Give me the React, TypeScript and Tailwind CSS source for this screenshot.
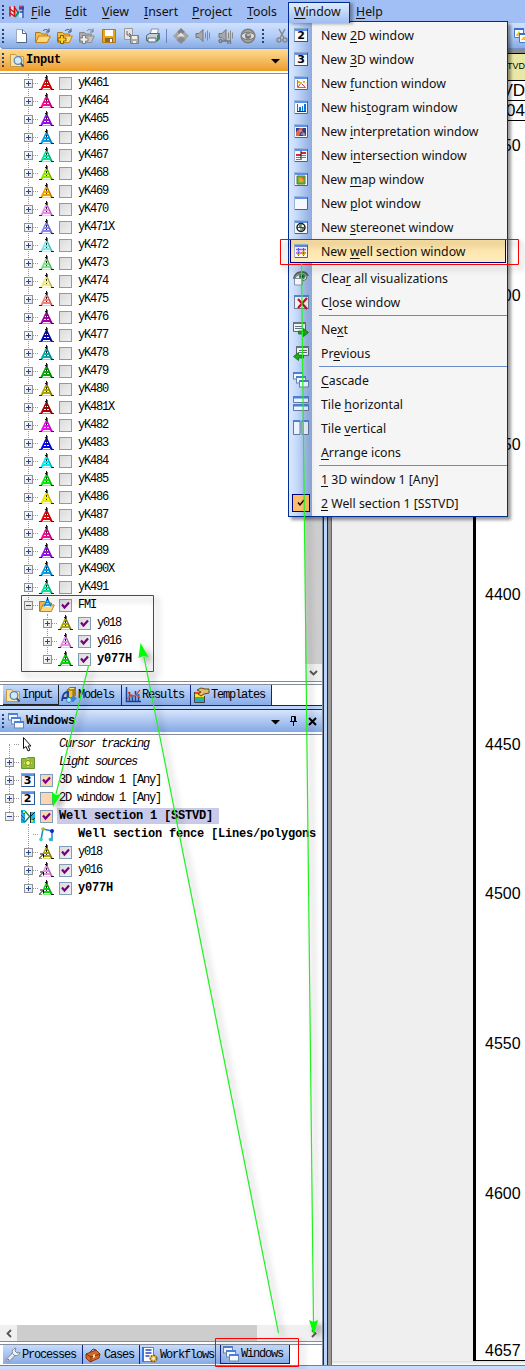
import React from "react";

const MONO = "font-['Liberation_Mono',monospace]";
const UI = "font-['Noto_Sans','Noto_Sans_CJK_SC',sans-serif]";

type IconProps = { children: React.ReactNode; w?: number; h?: number };

function Svg({ children, w = 16, h = 16 }: IconProps) {
  return (
    <svg width={w} height={h} viewBox={`0 0 ${w} ${h}`} className="block shrink-0" fill="none">
      {children}
    </svg>
  );
}

function Tower({ color, linked }: { color: string; linked?: boolean }) {
  return (
    <Svg w={15} h={16}>
      <path d="M6.800 3h1.400l5.600 11.500H1.200z" fill={color} />
      <path d="M8.200 3l5.600 11.500h-1.300L7.500 4z" fill="#000" fillOpacity=".28" />
      <g shapeRendering="crispEdges">
        <path d="M6 7h1v1H6zM8 7h1v1H8zM5 10h2v1H5zM8 10h2v1H8zM4 13h7v1H4z" fill="#fff" />
        <path d="M7 0h1v4H7zM6 2h1v1H6z" fill="#111" />
        <path d="M8 1h1v3H8z" fill="#666" />
        <path d="M7 6h1v2H7zM7 10h1v1H7zM0 14h3v1H0zM12 14h3v1h-3z" fill="#222" />
      </g>
      {linked && (
        <>
          <path d="M0 9h4.500v5.500H0z" fill="#fff" />
          <path d="M0 14.500L4 10.500M1 10h3.500v3.500" stroke="#000" />
        </>
      )}
    </Svg>
  );
}

function NumberWindow({ n }: { n: string }) {
  return (
    <span className="flex h-[14px] w-[14px] shrink-0 flex-col border border-[#8fa6c8] border-r-[#33588f] border-b-[#33588f] bg-[#f7f9fc]">
      <span className="h-[2px] bg-[#5b91ec]" />
      <span className="flex h-[10px] items-center justify-center font-['DejaVu_Sans',sans-serif] text-[11px] leading-[10px] font-bold text-black">
        {n}
      </span>
    </span>
  );
}

function MiniWindow({ children }: { children?: React.ReactNode }) {
  return (
    <Svg w={14} h={14}>
      <rect x=".5" y=".5" width="13" height="13" fill="#f5f8fd" stroke="#9db4d8" />
      <path d="M1 1h12v2H1z" fill="#5b91ec" />
      <path d="M13.500 1v12.500H1" stroke="#48648f" />
      {children}
    </Svg>
  );
}

function CascadeIcon() {
  return (
    <Svg>
      {[0, 4, 8].map((p, i) => (
        <g key={i} transform={`translate(${i * 3} ${p})`}>
          <rect x=".5" y=".5" width="9" height="6.500" fill="#f4f8ff" stroke="#6a84ae" />
          <path d="M0 0h10v2H0z" fill="#4a80dc" />
        </g>
      ))}
    </Svg>
  );
}

function Folder({ gray, plus, search, tower }: { gray?: boolean; plus?: boolean; search?: boolean; tower?: boolean }) {
  if (search) {
    return (
      <Svg>
        <path d="M1.500 14.500V2.500h5l1.500 2h6.500v10z" fill="#f8e3a4" stroke="#c79a44" />
        <circle cx="9" cy="8.500" r="3.800" fill="#cfeaff" stroke="#5f86b4" strokeWidth="1.300" />
        <path d="M11.800 11.300l2.700 3.200" stroke="#46506b" strokeWidth="2" />
      </Svg>
    );
  }
  return (
    <Svg>
      <path d="M.500 14V4.500h5l1.500 1.500h5.500v8z" fill={gray ? "#aaa" : "#eebb50"} stroke={gray ? "#8a8a8a" : "#b07a1a"} />
      <path d="M.800 14.500l3-6.500h11.500l-3 6.500z" fill={gray ? "#c3c3c3" : "#ffd977"} stroke={gray ? "#909090" : "#bd8422"} />
      {!tower && <path d="M8 3c1.500-2 4-2 5.500 0M14 .5v3.500h-3" stroke={gray ? "#777" : "#38485e"} />}
      {plus && (
        <path d="M3.500 7.500h3v2.500H9v3H6.500v2.500h-3V13H1v-3h2.500z" fill={gray ? "#eee" : "#ffd21c"} stroke={gray ? "#777" : "#7a5200"} strokeWidth=".9" />
      )}
      {tower && (
        <>
          <path d="M8.500 1l4 9h-8z" fill="#e6f6ff" />
          <path d="M8.500 1.500L5 9.500M8.500 1.500l3.500 8M7 5.500h3M6 8h5" stroke="#0787d8" strokeWidth="1.300" />
          <path d="M8.500 0v3" stroke="#111" />
        </>
      )}
    </Svg>
  );
}

function WellSectionIcon() {
  return (
    <Svg w={15} h={15}>
      <path d="M1 1h4v13H1z" fill="#15b3dd" />
      <path d="M1 2l4 3M1 6l4 4M1 10l4 3" stroke="#075ca0" />
      <path d="M5 2l5 6M5 13l5-6" stroke="#158a46" strokeWidth="1.300" />
      <path d="M10 3h5v11h-5z" fill="#20b9e2" />
      <path d="M10 8l5-5M10 13l5-4M10.500 3v11" stroke="#123" />
      <path d="M3 2h2v2H3zM11 11h2v2h-2z" fill="#cde93d" />
    </Svg>
  );
}

function AppLogo() {
  return (
    <Svg w={15} h={16}>
      <path d="M1 2.500h4v10H1z" fill="#f7dcda" />
      <path d="M1 2.500v10M5.500 2v11" stroke="#c9151c" strokeWidth="1.600" />
      <path d="M1 5l4 3M1 9l4 3M6 4l4 6" stroke="#c21021" strokeWidth="1.300" />
      <path d="M6 13l4-5 1.500 3" stroke="#00964a" strokeWidth="1.700" />
      <path d="M10 1.500h4.500v5H10z" fill="#e24a48" />
      <path d="M10 6.500h4.500v7H10z" fill="#dbe4f8" />
      <path d="M10 4h5M14 2v12M10.500 8h4" stroke="#1c49b5" strokeWidth="1.300" />
    </Svg>
  );
}

function Speaker({ extra }: { extra?: boolean }) {
  return (
    <Svg>
      <path d="M1 5.500h3l4-4v12l-4-4H1z" fill="#a8a8a8" stroke="#777" />
      <path d="M10.500 4.500v6M12.500 2.500v10M14.500 4.500v6" stroke="#888" />
      {extra && <path d="M4 13h9M10 13v3M12.500 13v3M1 13a1.500 1.500 0 1 0 3 0a1.500 1.500 0 1 0-3 0" stroke="#777" strokeWidth="1.400" />}
    </Svg>
  );
}

function Grip() {
  return (
    <span className="h-[14px] w-[2px] shrink-0 bg-[repeating-linear-gradient(to_bottom,#27417b_0_2px,transparent_2px_4px)]" />
  );
}

function Down() {
  return (
    <Svg w={9} h={5}>
      <path d="M0 0h9L4.500 4.500z" fill="#000" />
    </Svg>
  );
}

function Toolbar() {
  const first = [
    <Svg key="n">
      <path d="M3.500 1.500h6l4 4v9h-10z" fill="#fff" stroke="#9aabc4" />
      <path d="M9.500 1.500v4h4M13.500 5.500v9h-10" stroke="#4b658c" />
    </Svg>,
    <Folder key="o" />,
    <Folder key="p" plus />,
    <Folder key="g" gray plus />,
    <Svg key="s">
      <path d="M1.500 1.500h13v13h-13z" fill="#e9a51c" stroke="#b67b10" />
      <path d="M4 2h8v6H4z" fill="#fff" />
      <path d="M4 10h8v4H4z" fill="#8a6a3a" />
      <path d="M9 11h2v3H9z" fill="#fff" />
    </Svg>,
    <Svg key="c">
      <path d="M1.500.5h8v11h-8z" fill="#e4e4e4" stroke="#999" />
      <path d="M4 3v4h4M6 5l2 2-2 2" stroke="#666" />
      <path d="M7.500 7.500h8v8h-8z" fill="#aaa" stroke="#808080" />
      <path d="M9 8h5v3H9zM10 13h3v2h-3z" fill="#eee" />
    </Svg>,
    <Svg key="r">
      <path d="M5 7l1.500-6h7L12 7z" fill="#fff" stroke="#7f91a5" />
      <path d="M1.500 7.500l3-2h10l-2 2v5h-11z" fill="#c7d1d8" stroke="#53677b" />
      <path d="M3 10h8v4H3z" fill="#eef7f4" stroke="#567" />
      <path d="M12 8l3-2v5l-3 3z" fill="#398e51" />
    </Svg>,
  ];
  const second = [
    <Svg key="d">
      <path d="M8 0l4 4-4 4-4-4z" fill="#808080" />
      <path d="M4 4l4 4-4 4-4-4zM12 4l4 4-4 4-4-4z" fill="#a4a4a4" />
      <path d="M8 8l4.500 4L8 16l-4.500-4z" fill="#8a8a8a" />
      <path d="M8 4.500l4 4H4z" fill="#e2e2e2" />
    </Svg>,
    <Speaker key="a" />,
    <Speaker key="b" extra />,
    <Svg key="e">
      <circle cx="8" cy="8" r="6.800" fill="#a7a7a7" stroke="#7d7d7d" strokeWidth="1.500" />
      <path d="M1 8c3-5 11-5 14 0c-3 5-11 5-14 0z" fill="#ddd" stroke="#777" />
      <circle cx="8" cy="8" r="3" fill="#777" />
      <path d="M7 7h3" stroke="#fff" />
    </Svg>,
  ];
  return (
    <div className="flex h-[26px] items-center rounded-bl-sm bg-linear-to-b from-[#d0e1fc] via-[#b2cdf6] to-[#86a9e3] pb-px pl-[2px] shadow-[inset_0_-1px_#6f91cc]">
      <Grip />
      <div className="ml-[6px] flex">
        {first.map((icon, i) => (
          <span key={i} className="flex w-[22px] justify-center">{icon}</span>
        ))}
      </div>
      <span className="ml-[2px] h-[14px] w-px bg-[#6984bb]" />
      <div className="ml-[3px] flex">
        {second.map((icon, i) => (
          <span key={i} className="flex w-[22.3px] justify-center">{icon}</span>
        ))}
      </div>
      <span className="ml-[3px] flex"><Grip /></span>
      <span className="ml-[11px]">
        <Svg w={13}>
          <path d="M4 1l5 9M10 1L5 10" stroke="#888" strokeWidth="1.500" />
          <circle cx="4" cy="12" r="2" stroke="#888" strokeWidth="1.500" />
          <circle cx="10" cy="12" r="2" stroke="#888" strokeWidth="1.500" />
        </Svg>
      </span>
      <span className="ml-auto w-[11px] overflow-hidden">
        <Svg w={16} h={17}>
          <path d="M.500 1.500h9v9h-9z" fill="#fff" stroke="#4478c9" />
          <path d="M0 1h10v2H0z" fill="#3b70cf" />
          <path d="M2 8l3-4 2 3 1 2H2z" fill="#e8c82b" />
          <path d="M5.500 6.500h9v9h-9z" fill="#fff" stroke="#4478c9" />
          <path d="M5 6h10v2H5z" fill="#3b70cf" />
          <path d="M7 13l3-4 3 4z" fill="#e8c82b" />
        </Svg>
      </span>
    </div>
  );
}

function Expander({ open }: { open?: boolean }) {
  return (
    <span className="relative z-10 flex h-[9px] w-[9px] shrink-0 items-center justify-center border border-[#919191] bg-linear-to-br from-white to-[#e2e2e2]">
      <span className="h-px w-[5px] bg-[#27479b]" />
      {!open && <span className="absolute top-px h-[5px] w-px bg-[#27479b]" />}
    </span>
  );
}

function Check({ on, peach }: { on?: boolean; peach?: boolean }) {
  return (
    <span className={`flex h-[13px] w-[13px] shrink-0 items-center justify-center border border-[#7f9db9] ${peach ? "bg-[#fbd6b3]" : "bg-linear-to-br from-[#dcdcdc] to-[#f0f0f0]"}`}>
      {on && (
        <Svg w={9} h={9}>
          <path d="M1 3.500l2.500 3L8 1.500" stroke="#770080" strokeWidth="2.200" />
        </Svg>
      )}
    </span>
  );
}

type RowProps = {
  indent: string;
  label: string;
  icon: React.ReactNode;
  expander?: "plus" | "minus" | "none";
  check?: "on" | "off" | "none";
  peach?: boolean;
  bold?: boolean;
  italic?: boolean;
  selected?: boolean;
};

function Row({ indent, label, icon, expander = "plus", check = "off", peach, bold, italic, selected }: RowProps) {
  return (
    <div className={`flex h-[18px] items-center ${indent}`}>
      {expander === "none" ? <span className="w-[9px]" /> : <Expander open={expander === "minus"} />}
      <span className="w-[5px] shrink-0 border-t border-dotted border-[#999]" />
      <span className="flex w-[17px] shrink-0 items-center justify-center">{icon}</span>
      <span className="ml-[4px] w-[13px] shrink-0">
        {check !== "none" && <Check on={check === "on"} peach={peach} />}
      </span>
      <span
        className={`ml-[4px] h-[16px] pr-[6px] pl-[2px] leading-[16px] whitespace-pre ${bold ? "font-bold tracking-[-0.2px]" : "tracking-[-1.2px]"} ${italic ? "italic" : ""} ${selected ? "bg-[#c9c9e9]" : ""}`}
      >
        {label}
      </span>
    </div>
  );
}

const wells: [string, string][] = [
  ["yK461", "#e00808"], ["yK464", "#ef0c9b"], ["yK465", "#9a0ee8"], ["yK466", "#079ee5"],
  ["yK467", "#10dc9b"], ["yK468", "#93e600"], ["yK469", "#eda000"], ["yK470", "#e78eea"],
  ["yK471X", "#8888ea"], ["yK472", "#83e8ec"], ["yK473", "#84df89"], ["yK474", "#eeea86"],
  ["yK475", "#ec8580"], ["yK476", "#aa00aa"], ["yK477", "#0505b0"], ["yK478", "#08aaaa"],
  ["yK479", "#05a805"], ["yK480", "#aaa505"], ["yK481X", "#ad0505"], ["yK482", "#f00cf0"],
  ["yK483", "#0808e8"], ["yK484", "#08e8ee"], ["yK485", "#06e808"], ["yK486", "#eeea05"],
  ["yK487", "#e80606"], ["yK488", "#ef0c9b"], ["yK489", "#9a0ee8"], ["yK490X", "#079ee5"],
  ["yK491", "#10dc9b"],
];

function InputTree() {
  return (
    <div className="flex h-[608px] border-t border-[#858c9c] bg-white">
      <div className="relative flex-1">
        <span className="absolute top-0 left-[28px] h-[528px] border-l border-dotted border-[#999]" />
        <span className="absolute top-[540px] left-[47px] h-[46px] border-l border-dotted border-[#999]" />
        {wells.map(([name, color]) => (
          <Row key={name} indent="pl-[24px]" label={name} icon={<Tower color={color} />} />
        ))}
        <Row indent="pl-[24px]" label="FMI" expander="minus" check="on" icon={<Folder tower />} />
        <Row indent="pl-[43px]" label="y018" check="on" icon={<Tower color="#aaa505" />} />
        <Row indent="pl-[43px]" label="y016" check="on" icon={<Tower color="#e78eea" />} />
        <Row indent="pl-[43px]" label="y077H" check="on" bold icon={<Tower color="#06d808" />} />
      </div>
      <div className="flex w-[17px] flex-col bg-[#cdcdcd]">
        <span className="flex-1" />
        <span className="flex h-[17px] items-center justify-center bg-[#f0f0f0]">
          <Svg w={9} h={6}>
            <path d="M1 1l3.500 3.500L8 1" stroke="#555" strokeWidth="1.800" />
          </Svg>
        </span>
      </div>
    </div>
  );
}

const ModelsIcon = () => (
  <Svg>
    <path d="M6 3l3-2.500h6L12 3z" fill="#ffe680" stroke="#6b5518" strokeWidth=".8" />
    <path d="M6 3h6v8H6z" fill="#f0c132" stroke="#6b5518" strokeWidth=".8" />
    <path d="M12 3l3-2.500v8L12 11z" fill="#a87c16" />
    <path d="M1 14c1-8 3-9 6-9v10M1 11h8" stroke="#173f96" strokeWidth="1.800" />
    <path d="M8 12l4-3 4 2-4 4.500z" fill="#3c82da" />
    <circle cx="8" cy="13" r="2.500" fill="#a9ecf4" stroke="#1a78a6" strokeWidth=".8" />
  </Svg>
);
const ResultsIcon = () => (
  <Svg>
    <path d="M1.500 0v14.500H16M4.500 5v9M7.500 8v6M10.500 4v10M13.500 7v7" stroke="#1b4292" strokeWidth="1.500" />
    <path d="M2 12l4-4 4 1 5-6M3 5l4 5 5-2 3 3" stroke="#dc4525" strokeWidth="1.200" />
    <path d="M3 10c4 3 7-5 12-1" stroke="#2994e2" />
  </Svg>
);
const TemplatesIcon = () => (
  <Svg>
    <path d="M1 5h9v10H1z" fill="#ea4e22" />
    <path d="M1 7h9v3H1z" fill="#ffe22b" />
    <path d="M1 10h9v2H1z" fill="#39bd52" />
    <path d="M1 12h9v3H1z" fill="#2aa6dd" />
    <path d="M.500 5v10.500h10V9" stroke="#444" />
    <path d="M3 3l4-2 4 1h4v4l-5 1-3 2-3-2 3-2z" fill="#e6bd67" stroke="#674914" />
  </Svg>
);
const WrenchIcon = () => (
  <Svg>
    <path d="M3 13l6.500-6.500" stroke="#7c8999" strokeWidth="4.500" strokeLinecap="round" />
    <path d="M3 13l6.500-6.500" stroke="#e6edf5" strokeWidth="2.800" strokeLinecap="round" />
    <path d="M11 1a4 4 0 0 0-3.500 5.500a4 4 0 0 0 7.500-1l-3 .5-2-2 1-3z" fill="#edf3fa" stroke="#7c8999" />
    <circle cx="3.200" cy="12.800" r="1" fill="#66758b" />
  </Svg>
);
const CaseIcon = () => (
  <Svg>
    <path d="M1 7l10-4 4 4-1 4-9 4-4-4z" fill="#d66727" stroke="#843612" />
    <path d="M1 7l5 3 9-3M6 10v5M5 5l3-3 3 1" stroke="#793410" />
    <path d="M8 8l2-1v3l-2 1z" fill="#ffe0a0" />
  </Svg>
);
const WorkflowIcon = () => (
  <Svg>
    <path d="M1.500.5h10v14h-10z" fill="#fff" stroke="#5b86c5" />
    <path d="M0 0h2v15H0z" fill="#3476dc" />
    <path d="M3.500 3h6M3.500 6h6M3.500 9h4" stroke="#2849bd" strokeWidth="1.500" />
    <circle cx="11.500" cy="11.500" r="3.300" fill="#edbb35" stroke="#895b11" strokeWidth="1.500" strokeDasharray="2 1" />
    <circle cx="11.500" cy="11.500" r="1.200" fill="#fff" />
  </Svg>
);

function Tab({ icon, label, width, active }: { icon: React.ReactNode; label: string; width: string; active?: boolean }) {
  return (
    <div className={`flex h-full shrink-0 items-center bg-linear-to-b from-[#c7dcfc] to-[#87abe7] pl-[2px] ${width} ${active ? "border-r border-b border-[#222]" : "border-r border-[#10257f]"}`}>
      {icon}
      <span className="ml-[1px] leading-[18px] tracking-[-1.2px] whitespace-pre">{label}</span>
    </div>
  );
}

function WindowsTree() {
  return (
    <div className="relative h-[591px] overflow-hidden border-t border-[#858c9c] bg-white">
      <span className="absolute top-[9px] left-[9px] h-[70px] border-l border-dotted border-[#999]" />
      <span className="absolute top-[89px] left-[28px] h-[62px] border-l border-dotted border-[#999]" />
      <Row indent="pl-[5px]" label="Cursor tracking" italic expander="none" check="none"
        icon={<span className="-ml-[2px]"><Svg w={11} h={16}><path d="M2.500 1.500v11l2.500-2 2 4.500 2-1-2-4h3z" fill="#fff" stroke="#111" /></Svg></span>} />
      <Row indent="pl-[5px]" label="Light sources" italic check="none"
        icon={<Svg w={14} h={13}><path d="M.500 2.500h5l1-1h7v11H.500z" fill="#91bd3e" stroke="#6b9433" /><circle cx="7" cy="7" r="2.500" fill="#fff46a" stroke="#7d9616" /><path d="M7 3v1M7 10v1M3 7h1M10 7h1" stroke="#fff599" /></Svg>} />
      <Row indent="pl-[5px]" label="3D window 1 [Any]" check="on" peach icon={<NumberWindow n="3" />} />
      <Row indent="pl-[5px]" label="2D window 1 [Any]" peach icon={<NumberWindow n="2" />} />
      <Row indent="pl-[5px]" label="Well section 1 [SSTVD]" check="on" peach bold selected expander="minus" icon={<WellSectionIcon />} />
      <Row indent="pl-[24px]" label="Well section fence [Lines/polygons" bold expander="none" check="none"
        icon={<Svg w={15} h={15}><path d="M2 13L4 2l9 2v9l-2-1" stroke="#168bcc" strokeWidth="1.500" /><circle cx="2" cy="12.500" r="1.800" fill="#2bd1c2" /><circle cx="4" cy="2" r="1.800" fill="#b8b526" /><circle cx="13" cy="4" r="2" fill="#1522c5" /><circle cx="11.500" cy="12.500" r="1.800" fill="#24b9dc" /></Svg>} />
      <Row indent="pl-[24px]" label="y018" check="on" icon={<Tower linked color="#aaa505" />} />
      <Row indent="pl-[24px]" label="y016" check="on" icon={<Tower linked color="#e78eea" />} />
      <Row indent="pl-[24px]" label="y077H" check="on" bold icon={<Tower linked color="#06d808" />} />
    </div>
  );
}

function LeftPane() {
  return (
    <div className={`flex w-[323px] shrink-0 flex-col border-r border-[#858c9c] bg-white text-[12px] text-black ${MONO}`}>
      <div className="flex h-[22px] items-center bg-linear-to-b from-[#fbdc91] to-[#ee9c22] pl-[2px]">
        <Grip />
        <span className="ml-[5px]"><Folder search /></span>
        <span className="ml-[1px] flex-1 font-bold tracking-[-0.2px]">Input</span>
        <span className="mr-[42px] pt-[2px]"><Down /></span>
      </div>
      <div className="h-[2px]" />
      <InputTree />
      <div className="h-[4px] border-y border-[#858c9c] bg-white" />
      <div className="flex h-[20px] pl-[3px]">
        <Tab icon={<Folder search />} label="Input" width="w-[56px]" active />
        <Tab icon={<ModelsIcon />} label="Models" width="w-[63px]" />
        <Tab icon={<span className="pl-px"><ResultsIcon /></span>} label="Results" width="w-[69px]" />
        <Tab icon={<span className="pl-px"><TemplatesIcon /></span>} label="Templates" width="w-[81px]" />
      </div>
      <div className="h-[5px] border-y border-[#10257f] bg-[#bdd5fb]" />
      <div className="flex h-[22px] items-center bg-linear-to-b from-[#d6e5fd] to-[#84a9e5] pl-[2px]">
        <Grip />
        <span className="ml-[4px]"><CascadeIcon /></span>
        <span className="ml-[2px] flex-1 font-bold tracking-[-0.2px]">Windows</span>
        <span className="pt-[2px]"><Down /></span>
        <span className="ml-[9px]">
          <Svg w={9} h={12}>
            <path d="M2.500 1.500h4v5h-4zM5.500 1.500v5M1 6.500h7M4.500 7v4" stroke="#000" />
          </Svg>
        </span>
        <span className="mr-[5px] ml-[10px]">
          <Svg w={9} h={9}>
            <path d="M1 1l7 7M8 1L1 8" stroke="#000" strokeWidth="2" />
          </Svg>
        </span>
      </div>
      <div className="h-[2px]" />
      <WindowsTree />
      <div className="flex h-[16px] bg-[#f0f0f0]">
        <span className="flex w-[17px] items-center justify-center">
          <Svg w={6} h={9}><path d="M5 1L1.500 4.500 5 8" stroke="#555" strokeWidth="1.800" /></Svg>
        </span>
        <span className="w-[240px] bg-[#cdcdcd]" />
        <span className="flex flex-1 items-center justify-end pr-[5px]">
          <Svg w={6} h={9}><path d="M1 1l3.500 3.500L1 8" stroke="#555" strokeWidth="1.800" /></Svg>
        </span>
      </div>
      <div className="h-[4px] border-y border-[#858c9c] bg-white" />
      <div className="flex h-[19px] pl-[3px]">
        <Tab icon={<WrenchIcon />} label="Processes" width="w-[80px]" />
        <Tab icon={<span className="pr-[2px]"><CaseIcon /></span>} label="Cases" width="w-[57px]" />
        <Tab icon={<span className="pr-px"><WorkflowIcon /></span>} label="Workflows" width="w-[81px]" />
        <Tab icon={<span className="pr-px"><CascadeIcon /></span>} label="Windows" width="w-[69px]" active />
      </div>
    </div>
  );
}

function WellView() {
  const depths = ["4250", "4300", "4350", "4400", "4450", "4500", "4550", "4600"];
  return (
    <div className="flex min-w-0 flex-1">
      <div className="w-[5px] shrink-0 border-x border-[#10257f] bg-[#bdd5fb]" />
      <div className="w-[4px] shrink-0 border-r border-[#666] bg-[#999]" />
      <div className="flex min-w-0 flex-1 flex-col font-['Liberation_Sans',sans-serif] text-black">
        <div className="h-[4px] bg-[#8c8c8c]" />
        <div className="flex h-[1308px]">
          <div className="w-[141px] shrink-0 bg-[#efefef]" />
          <div className="flex min-w-0 flex-1 flex-col border-y border-l-[3px] border-black bg-white">
            <div className="flex h-[27px] shrink-0 items-center justify-end border-b border-black bg-[#e9e7a5] text-[9px]">SSTVD</div>
            <div className="flex h-[20px] shrink-0 items-center justify-end border-b border-black pt-px text-[17px]">TVD</div>
            <div className="flex h-[20px] shrink-0 items-center justify-end border-b border-black text-[17px]">4004</div>
            <div className="h-[16px] shrink-0" />
            {depths.map((d) => (
              <div key={d} className="h-[149.7px] shrink-0 pl-[9px] text-[16px] leading-[18px]">{d}</div>
            ))}
            <div className="mt-auto h-[18px] shrink-0 pl-[9px] text-[16px] leading-[18px]">4657</div>
          </div>
        </div>
        <div className="flex-1 bg-linear-to-b from-[#ddd] to-white" />
      </div>
    </div>
  );
}

function Under({ text }: { text: string }) {
  const [a, b, c] = text.split("_");
  return (
    <>
      {a}
      <span className="underline decoration-1 underline-offset-2">{b}</span>
      {c}
    </>
  );
}

function MenuBar() {
  const items: [string, string][] = [
    ["_F_ile", "w-[34px]"], ["_E_dit", "w-[37px]"], ["_V_iew", "w-[42px]"], ["_I_nsert", "w-[48px]"],
    ["_P_roject", "w-[55px]"], ["_T_ools", "w-[41px]"],
  ];
  return (
    <div className={`flex h-[23px] items-center bg-[#a1bef5] pl-[2px] text-[12.3px] text-[#111] ${UI}`}>
      <Grip />
      <span className="ml-[5px]"><AppLogo /></span>
      <div className="ml-[7px] flex items-center pt-px">
        {items.map(([t, w]) => (
          <span key={t} className={w}><Under text={t} /></span>
        ))}
        <span className="relative z-30 -my-[2px] flex h-[21px] w-[62px] items-center border border-b-0 border-[#002d96] bg-linear-to-b from-[#dfecff] to-[#9fbdf0] pl-[5px] shadow-[3px_1px_3px_#0005]">
          <Under text="_W_indow" />
        </span>
        <span className="ml-[6px]"><Under text="_H_elp" /></span>
      </div>
    </div>
  );
}

const EyeIcon = () => (
  <Svg>
    <path d="M1 9C2 1 12 0 15 6" stroke="#5b6057" strokeWidth="2" />
    <path d="M2 8c3-5 10-5 12 0-3 4-8 4-12 0z" fill="#e8eee5" stroke="#5a6859" />
    <circle cx="9" cy="6.500" r="3" fill="#27914c" />
    <circle cx="9" cy="6.500" r="1.200" fill="#111" />
    <path d="M1.500 8.500h8v6.500h-8z" fill="#f5f7fb" stroke="#8291a6" />
  </Svg>
);

function NavIcon({ back }: { back?: boolean }) {
  return (
    <Svg>
      <path d={back ? "M3.500 1.500h12v9h-12z" : "M.500 1.500h12v9H.500z"} fill="#f3f4f6" stroke="#5b6470" />
      <path d={back ? "M3 1h13v2H3z" : "M0 1h13v2H0z"} fill="#6a7480" />
      <path d={back ? "M6 5.500h8M6 7.500h8" : "M2 5.500h8M2 7.500h8"} stroke="#657080" />
      <path
        d={back ? "M.500 11.500l5-4v2.500h5v3h-5v2.500z" : "M15.500 11.500l-5-4v2.500h-5v3h5v2.500z"}
        fill="#22a71d" stroke="#117012" strokeWidth=".8"
      />
    </Svg>
  );
}

type MenuEntry = { text: string; icon?: React.ReactNode; hot?: boolean; checked?: boolean } | null;

const menu: MenuEntry[] = [
  { text: "New _2_D window", icon: <NumberWindow n="2" /> },
  { text: "New _3_D window", icon: <NumberWindow n="3" /> },
  { text: "New _f_unction window", icon: <MiniWindow><path d="M3.500 4v7.500H12" stroke="#789" /><path d="M4 11l3-4 4 4" stroke="#d13c2d" /><path d="M4 5h2v2H4zM9 5h2v2H9zM6 6h2v2H6z" fill="#e3b51e" /></MiniWindow> },
  { text: "New his_t_ogram window", icon: <MiniWindow><path d="M3 4h1v7H3zM5 7h2v4H5zM8 6h1v5H8zM10 4h2v7h-2z" fill="#0877da" /><path d="M3 11.500h9" stroke="#135" /></MiniWindow> },
  { text: "New _i_nterpretation window", icon: <MiniWindow><path d="M2 4h10v8H2z" fill="#253e91" /><path d="M2 8l4-4h3l-4 8H2zM8 6l4 6H9z" fill="#df654d" /><path d="M5 7h3M7 10h4" stroke="#a6bde8" /></MiniWindow> },
  { text: "New i_n_tersection window", icon: <MiniWindow><path d="M2 6h5v2H2zM7 4h5v2H7z" fill="#e42424" /><path d="M2 9h5v1H2zM7 7h5v1H7z" fill="#e43bc5" /><path d="M7 3v9" stroke="#111" /><path d="M2 11.500h5M7 9.500h5" stroke="#268fd2" /></MiniWindow> },
  { text: "New _m_ap window", icon: <MiniWindow><path d="M3 4h8v8H3z" fill="#7cad32" stroke="#557d32" /><path d="M5 6h4v4H5z" fill="#e9a526" /><path d="M8 5h2v2H8z" fill="#e95b24" /></MiniWindow> },
  { text: "New _p_lot window", icon: <MiniWindow /> },
  { text: "New _s_tereonet window", icon: <MiniWindow><circle cx="7" cy="7.500" r="4" fill="#fff" stroke="#111" strokeWidth="1.400" /><path d="M7 3v9M3 7.500h8" stroke="#444" /><path d="M5 5h2v2H5zM8 8h2v2H8z" fill="#39975b" /></MiniWindow> },
  { text: "New _w_ell section window", hot: true, icon: <MiniWindow><path d="M2 5.500h3l4 0h3M2 9h10" stroke="#e938ca" strokeWidth="1.500" /><path d="M4.500 4v8M9.500 4v8" stroke="#4561d7" /><path d="M3.500 7.500h2v3h-2zM8.500 7.500h2v3h-2z" stroke="#d7a416" /></MiniWindow> },
  null,
  { text: "Clea_r_ all visualizations", icon: <EyeIcon /> },
  { text: "C_l_ose window", icon: <Svg><rect x="1.500" y="1.500" width="14" height="13" fill="#eef2f8" stroke="#70819e" /><path d="M1 1h15v2H1z" fill="#5385cf" /><path d="M5 5l9 10M14 4L5 14" stroke="#c70e1f" strokeWidth="2.200" /></Svg> },
  null,
  { text: "Ne_x_t", icon: <NavIcon /> },
  { text: "Pr_e_vious", icon: <NavIcon back /> },
  null,
  { text: "_C_ascade", icon: <CascadeIcon /> },
  { text: "Tile _h_orizontal", icon: <Svg><path d="M.500.5h15v6H.500zM.500 8.500h15v6H.500z" fill="#edf3fe" stroke="#61799f" /><path d="M0 0h16v2.500H0zM0 8h16v2.500H0z" fill="#4a80dc" /></Svg> },
  { text: "Tile _v_ertical", icon: <Svg><path d="M.500.5h6.500v14H.500zM9 .5h6.500v14H9z" fill="#edf3fe" stroke="#61799f" /><path d="M0 0h7v2H0zM9 0h7v2H9z" fill="#4a80dc" /></Svg> },
  { text: "_A_rrange icons" },
  null,
  { text: "_1_ 3D window 1 [Any]" },
  { text: "_2_ Well section 1 [SSTVD]", checked: true },
];

function WindowMenu() {
  return (
    <div className={`absolute top-[21px] left-[288px] z-20 w-[220px] border border-[#002d96] bg-[linear-gradient(to_right,#dce9fe_0,#c3d8fa_8px,#8cabdf_23px,#f5f5f5_23px)] pt-px pb-px text-[12.3px] text-[#111] shadow-[3px_3px_3px_#0006] ${UI}`}>
      {menu.map((m, i) =>
        m === null ? (
          <div key={i} className="flex h-[3px] items-center pl-[30px]">
            <span className="h-px flex-1 bg-[#6a8ccb]" />
          </div>
        ) : (
          <div
            key={i}
            className={`flex h-[24px] items-center ${m.hot ? "mx-px bg-linear-to-b from-[#fbdf9f] to-[#ffecbd] shadow-[inset_0_0_0_1px_#000080]" : "px-px"}`}
          >
            <span className="flex w-[22px] shrink-0 items-center justify-center">
              {m.checked ? (
                <span className="flex h-[18px] w-[18px] items-center justify-center border border-[#000080] bg-[#ffbd69]">
                  <Svg w={8} h={8}><path d="M1 3.500L3 6l4-5" stroke="#000" strokeWidth="1.400" /></Svg>
                </span>
              ) : (
                m.icon
              )}
            </span>
            <span className="ml-[9px] pt-[2px] whitespace-pre"><Under text={m.text} /></span>
          </div>
        ),
      )}
    </div>
  );
}

function Annotations() {
  return (
    <svg className="pointer-events-none absolute inset-0 z-40" width="525" height="1369" viewBox="0 0 525 1369" fill="none">
      <g style={{ filter: "drop-shadow(4px 4px 3px rgba(0,0,0,.42))" }}>
        <path d="M21.500 595.500h132v76h-132zM280.500 239.500h238v25h-238zM215.500 1338.500h83v28h-83z" stroke="#ff0000" />
        <path d="M88.500 666L56 794M278.500 1333L144 657M301.500 264L313.500 1322" stroke="#20f020" strokeWidth="1.200" />
        <path d="M53 807l-1-15 4 3 5-1zM140.500 643l-2 15 5-2 5 1zM314 1335l-5-15 4.500 2 4.500-2z" fill="#00ff00" />
      </g>
    </svg>
  );
}

export default function App() {
  return (
    <div className="relative flex h-[1369px] w-[525px] flex-col overflow-hidden bg-white">
      <MenuBar />
      <Toolbar />
      <div className="flex min-h-0 flex-1">
        <LeftPane />
        <WellView />
      </div>
      <div className="h-[4px] shrink-0 border-t border-[#5a83ca] bg-[#c8dcfb]" />
      <WindowMenu />
      <Annotations />
    </div>
  );
}
